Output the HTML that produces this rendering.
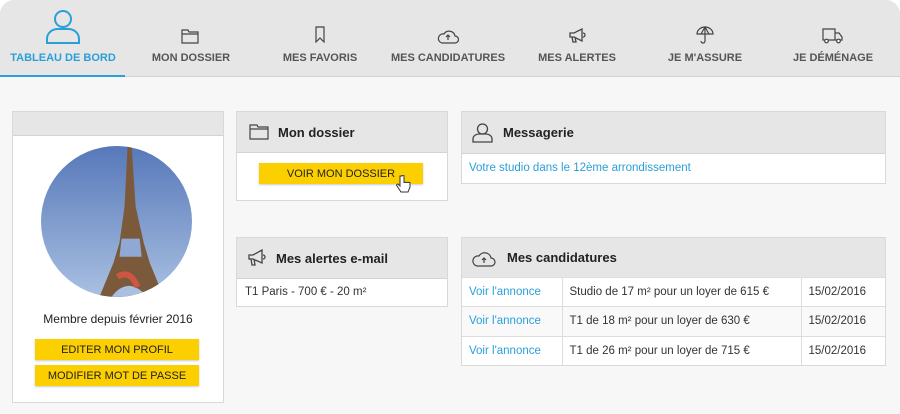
<!DOCTYPE html>
<html><head><meta charset="utf-8"><style>
*{box-sizing:border-box;margin:0;padding:0}
body{width:900px;height:414px;background:#fff;font-family:"Liberation Sans",sans-serif;overflow:hidden;position:relative}
.wrap{position:absolute;left:0;top:0;width:900px;height:414px;background:#f7f7f7;border-radius:14px 14px 0 0;overflow:hidden}
.nav{position:absolute;left:0;top:0;width:900px;height:77px;background:#e6e6e6;border-bottom:1px solid #d2d2d2}
.ni{position:absolute;top:52px;font-size:11px;font-weight:bold;color:#555;transform:translateX(-50%);white-space:nowrap}
.ic{position:absolute;transform:translateX(-50%)}
.act{position:absolute;left:0;top:75px;width:125px;height:2px;background:#2a9fd8}
.card{position:absolute;background:#fff;border:1px solid #d9d9d9}
.hd{background:#e6e6e6;border-bottom:1px solid #d3d3d3;position:relative;font-weight:bold;font-size:13px;color:#222}
.btn{position:absolute;background:#fccf00;font-size:11px;color:#222;text-align:center;line-height:22px;height:21px;box-shadow:0 1px 2px rgba(0,0,0,.2)}
.link{color:#2a9fd8}
table{border-collapse:collapse;width:100%;font-size:11.5px}
td{border-top:1px solid #ddd;height:29.3px;padding-left:7px;color:#333}
td+td{border-left:1px solid #ddd}
tr:nth-child(2) td{background:#f9f9f9}
</style></head><body><div class="wrap">
<div class="nav">
<svg class="ic" style="left:63px;top:9px" width="36" height="35" viewBox="0 0 36 35" fill="none" stroke="#2a9fd8" stroke-width="2"><circle cx="18" cy="10" r="8"/><path d="M2 34v-4c0-6 5-10 11-10h10c6 0 11 4 11 10v4z"/></svg>
<svg class="ic" style="left:190px;top:29px" width="18" height="15" viewBox="0 0 18 15" fill="none" stroke="#444" stroke-width="1.2"><path d="M1 1h6l1 2h9v11H1z M1 5h16"/></svg>
<svg class="ic" style="left:320px;top:26px" width="10" height="17" viewBox="0 0 10 17" fill="none" stroke="#444" stroke-width="1.2"><path d="M1 1h8v15l-4-4-4 4z"/></svg>
<svg class="ic" style="left:448px;top:28px" width="22" height="16" viewBox="0 0 22 16" fill="none" stroke="#444" stroke-width="1.2"><path d="M5 15h13a3.5 3.5 0 0 0 0-7 6 6 0 0 0-11-2 4.5 4.5 0 0 0-2 9z M11 12V7 M9 9l2-2 2 2"/></svg>
<svg class="ic" style="left:577px;top:28px" width="18" height="15" viewBox="0 0 18 15" fill="none" stroke="#444" stroke-width="1.3"><path d="M2 5h4l8-4v12L6 9H2z M4 9l1 5h3l-1-5 M15 5a2 2 0 0 1 0 4"/></svg>
<svg class="ic" style="left:705px;top:26px" width="18" height="18" viewBox="0 0 18 18" fill="none" stroke="#444" stroke-width="1.2"><path d="M1 8a8 7 0 0 1 16 0z M9 1v14a2 2 0 0 1-4 0 M5 8l4-7 4 7"/></svg>
<svg class="ic" style="left:833px;top:28px" width="22" height="16" viewBox="0 0 22 16" fill="none" stroke="#444" stroke-width="1.2"><path d="M1 1h12v11H1z M13 5h4l3 4v3h-7"/><circle cx="4.5" cy="13" r="1.8" fill="#fff"/><circle cx="16.5" cy="13" r="1.8" fill="#fff"/></svg>
<div class="ni" style="left:63px;color:#2a9fd8">TABLEAU DE BORD</div>
<div class="ni" style="left:191px">MON DOSSIER</div>
<div class="ni" style="left:320px">MES FAVORIS</div>
<div class="ni" style="left:448px">MES CANDIDATURES</div>
<div class="ni" style="left:577px">MES ALERTES</div>
<div class="ni" style="left:705px">JE M'ASSURE</div>
<div class="ni" style="left:833px">JE DÉMÉNAGE</div>
<div class="act"></div>
</div>

<div class="card" style="left:12px;top:111px;width:212px;height:292px">
<div class="hd" style="height:24px"></div>
<svg style="position:absolute;left:28px;top:34px" width="151" height="151" viewBox="0 0 150 150"><defs><linearGradient id="s" x1="0" y1="0" x2="0" y2="1"><stop offset="0" stop-color="#5778b9"/><stop offset="1" stop-color="#a9c0e2"/></linearGradient><clipPath id="c"><circle cx="75" cy="75" r="75"/></clipPath></defs><g clip-path="url(#c)"><rect width="150" height="150" fill="url(#s)"/><path d="M86 0h4l4 60 8 36 6 20 14 34H58l14-34 6-20 5-36z" fill="#7a5a3a"/><path d="M78 110h22l-2-18h-18z" fill="#8fa9d4"/><path d="M70 150q16-22 36 0z" fill="#a9c0e2"/><path d="M76 130q12-8 20 10" stroke="#c54" stroke-width="6" fill="none"/></g></svg>
<div style="position:absolute;top:200px;width:100%;text-align:center;font-size:12px;color:#222">Membre depuis février 2016</div>
<div class="btn" style="left:22px;top:227px;width:164px">EDITER MON PROFIL</div>
<div class="btn" style="left:22px;top:253px;width:164px">MODIFIER MOT DE PASSE</div>
</div>

<div class="card" style="left:236px;top:111px;width:212px;height:90px">
<div class="hd" style="height:41px"><svg style="position:absolute;left:12px;top:12px" width="20" height="16" viewBox="0 0 20 16" fill="none" stroke="#444" stroke-width="1.2"><path d="M1 1h7l1 2h10v12H1z M1 5h18"/></svg><span style="position:absolute;left:41px;top:13px">Mon dossier</span></div>
<div class="btn" style="left:22px;top:51px;width:164px">VOIR MON DOSSIER</div>
<svg style="position:absolute;left:158px;top:63px" width="16" height="20" viewBox="0 0 16 20"><path d="M5 1v10l-2-2c-1 0-2 1-1 2l4 6h7l2-5v-4c0-1-2-1-2 0 0-1-2-1-2 0 0-1-2-1-2 0V1c0-1-2-1-2 0z" fill="#fff" stroke="#333" stroke-width="1"/></svg>
</div>

<div class="card" style="left:236px;top:237px;width:212px;height:70px">
<div class="hd" style="height:41px"><svg style="position:absolute;left:10px;top:11px" width="20" height="17" viewBox="0 0 20 17" fill="none" stroke="#444" stroke-width="1.3"><path d="M2 6h4l9-5v13L6 10H2z M4 10l1 6h3l-1-6 M16 6a2 2 0 0 1 0 4"/></svg><span style="position:absolute;left:39px;top:13px">Mes alertes e-mail</span></div>
<div style="position:absolute;left:8px;top:48px;font-size:11.5px;color:#333">T1 Paris - 700 € - 20 m²</div>
</div>

<div class="card" style="left:461px;top:111px;width:425px;height:73px">
<div class="hd" style="height:42px"><svg style="position:absolute;left:10px;top:11px" width="21" height="20" viewBox="0 0 21 20" fill="none" stroke="#444" stroke-width="1.3"><circle cx="10.5" cy="6" r="5"/><path d="M1 19v-3c0-3 3-5 6-5h7c3 0 6 2 6 5v3z"/></svg><span style="position:absolute;left:41px;top:13px">Messagerie</span></div>
<div class="link" style="position:absolute;left:7px;top:50px;font-size:11.5px">Votre studio dans le 12ème arrondissement</div>
</div>

<div class="card" style="left:461px;top:237px;width:425px;height:129px">
<div class="hd" style="height:39px;border-bottom:none"><svg style="position:absolute;left:10px;top:11px" width="24" height="18" viewBox="0 0 24 18" fill="none" stroke="#444" stroke-width="1.2"><path d="M5 17h14a4 4 0 0 0 0-8 6.5 6.5 0 0 0-12-2 5 5 0 0 0-2 10z M12 14V9 M10 11l2-2 2 2"/></svg><span style="position:absolute;left:45px;top:12px">Mes candidatures</span></div>
<table>
<tr><td class="link" style="width:100px">Voir l'annonce</td><td style="width:239px">Studio de 17 m² pour un loyer de 615 €</td><td>15/02/2016</td></tr>
<tr><td class="link">Voir l'annonce</td><td>T1 de 18 m² pour un loyer de 630 €</td><td>15/02/2016</td></tr>
<tr><td class="link">Voir l'annonce</td><td>T1 de 26 m² pour un loyer de 715 €</td><td>15/02/2016</td></tr>
</table>
</div>
</div></body></html>
